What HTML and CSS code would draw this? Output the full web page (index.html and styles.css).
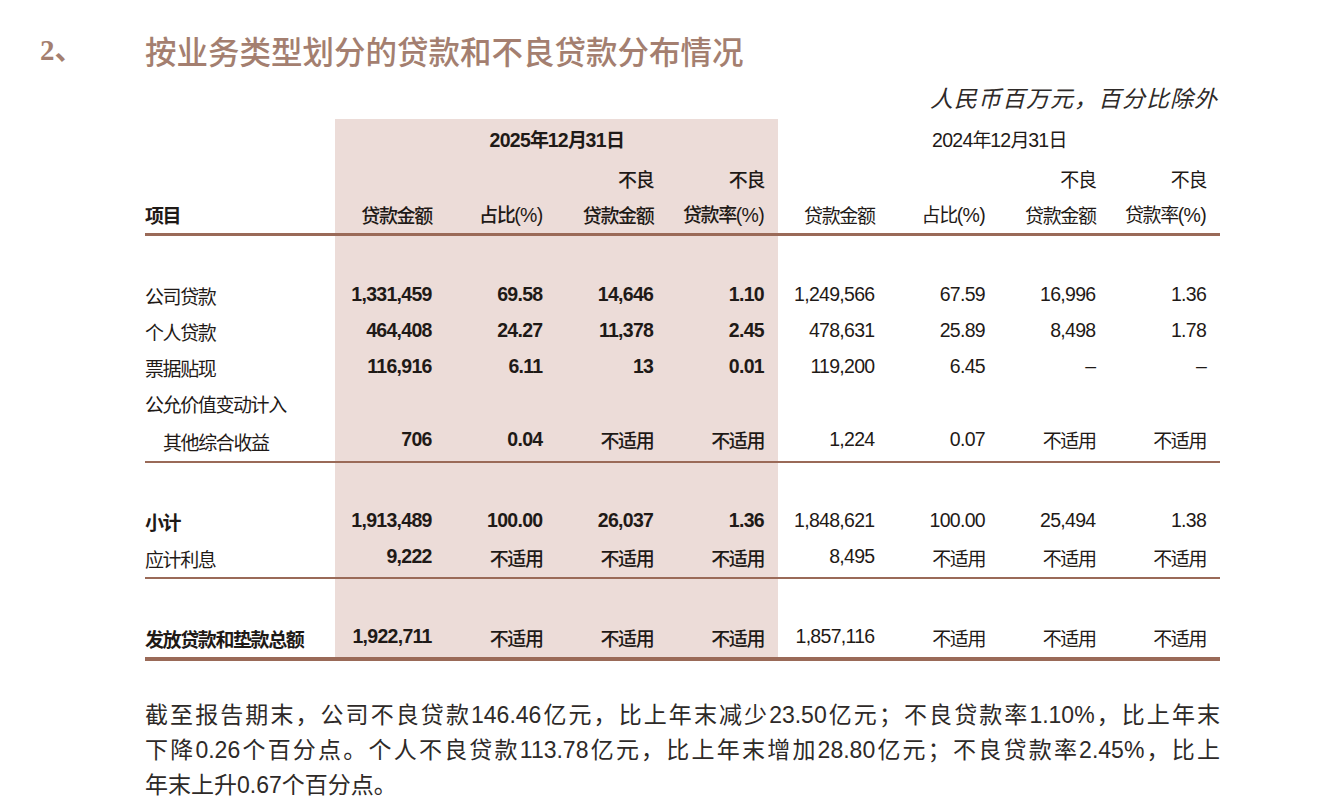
FILE: index.html
```html
<!DOCTYPE html>
<html lang="zh-CN">
<head>
<meta charset="utf-8">
<title>按业务类型划分的贷款和不良贷款分布情况</title>
<link rel="stylesheet" href="styles.css">
</head>
<body>
<div class="page">
  <h2 class="title"><span class="num">2、</span><span class="title-text">按业务类型划分的贷款和不良贷款分布情况</span></h2>
  <div class="body">
    <div class="unit">人民币百万元，百分比除外</div>
    <table class="loans">
      <colgroup>
        <col class="c-label">
        <col class="c-num"><col class="c-num"><col class="c-num"><col class="c-num">
        <col class="c-num2"><col class="c-num2"><col class="c-num2"><col class="c-num2">
      </colgroup>
      <tbody>
        <tr class="r-date">
          <td></td>
          <td class="cur date b" colspan="4">2025<span class="zh">年</span>12<span class="zh">月</span>31<span class="zh">日</span></td>
          <td class="date" colspan="4">2024<span class="zh">年</span>12<span class="zh">月</span>31<span class="zh">日</span></td>
        </tr>
        <tr class="r-std">
          <td></td>
          <td class="cur"></td><td class="cur"></td>
          <td class="cur zh m">不良</td><td class="cur zh m">不良</td>
          <td></td><td></td>
          <td class="zh">不良</td><td class="zh">不良</td>
        </tr>
        <tr class="r-head">
          <td class="lbl b">项目</td>
          <td class="cur zh m">贷款金额</td>
          <td class="cur m"><span class="zh">占比</span>(%)</td>
          <td class="cur zh m">贷款金额</td>
          <td class="cur m"><span class="zh">贷款率</span>(%)</td>
          <td class="zh">贷款金额</td>
          <td><span class="zh">占比</span>(%)</td>
          <td class="zh">贷款金额</td>
          <td><span class="zh">贷款率</span>(%)</td>
        </tr>
        <tr class="rule rule3"><td colspan="9"></td></tr>
        <tr class="r-gap41"><td></td><td class="cur"></td><td class="cur"></td><td class="cur"></td><td class="cur"></td><td colspan="4"></td></tr>
        <tr class="r-std">
          <td class="lbl">公司贷款</td>
          <td class="cur b">1,331,459</td><td class="cur b">69.58</td><td class="cur b">14,646</td><td class="cur b">1.10</td>
          <td>1,249,566</td><td>67.59</td><td>16,996</td><td>1.36</td>
        </tr>
        <tr class="r-std">
          <td class="lbl">个人贷款</td>
          <td class="cur b">464,408</td><td class="cur b">24.27</td><td class="cur b">11,378</td><td class="cur b">2.45</td>
          <td>478,631</td><td>25.89</td><td>8,498</td><td>1.78</td>
        </tr>
        <tr class="r-std">
          <td class="lbl">票据贴现</td>
          <td class="cur b">116,916</td><td class="cur b">6.11</td><td class="cur b">13</td><td class="cur b">0.01</td>
          <td>119,200</td><td>6.45</td><td>–</td><td>–</td>
        </tr>
        <tr class="r-std">
          <td class="lbl">公允价值变动计入</td>
          <td class="cur"></td><td class="cur"></td><td class="cur"></td><td class="cur"></td>
          <td></td><td></td><td></td><td></td>
        </tr>
        <tr class="r-last4">
          <td class="lbl indent">其他综合收益</td>
          <td class="cur b">706</td><td class="cur b">0.04</td><td class="cur zh m">不适用</td><td class="cur zh m">不适用</td>
          <td>1,224</td><td>0.07</td><td class="zh">不适用</td><td class="zh">不适用</td>
        </tr>
        <tr class="rule rule2"><td colspan="9"></td></tr>
        <tr class="r-gap40"><td></td><td class="cur"></td><td class="cur"></td><td class="cur"></td><td class="cur"></td><td colspan="4"></td></tr>
        <tr class="r-std">
          <td class="lbl b">小计</td>
          <td class="cur b">1,913,489</td><td class="cur b">100.00</td><td class="cur b">26,037</td><td class="cur b">1.36</td>
          <td>1,848,621</td><td>100.00</td><td>25,494</td><td>1.38</td>
        </tr>
        <tr class="r-last2">
          <td class="lbl">应计利息</td>
          <td class="cur b">9,222</td><td class="cur zh m">不适用</td><td class="cur zh m">不适用</td><td class="cur zh m">不适用</td>
          <td>8,495</td><td class="zh">不适用</td><td class="zh">不适用</td><td class="zh">不适用</td>
        </tr>
        <tr class="rule rule2"><td colspan="9"></td></tr>
        <tr class="r-gap40"><td></td><td class="cur"></td><td class="cur"></td><td class="cur"></td><td class="cur"></td><td colspan="4"></td></tr>
        <tr class="r-last2">
          <td class="lbl b">发放贷款和垫款总额</td>
          <td class="cur b">1,922,711</td><td class="cur zh m">不适用</td><td class="cur zh m">不适用</td><td class="cur zh m">不适用</td>
          <td>1,857,116</td><td class="zh">不适用</td><td class="zh">不适用</td><td class="zh">不适用</td>
        </tr>
        <tr class="rule rule4"><td colspan="9"></td></tr>
      </tbody>
    </table>
    <p class="note"><span class="jl">截至报告期末，公司不良贷款146.46亿元，比上年末减少23.50亿元；不良贷款率1.10%，比上年末</span><span class="jl">下降0.26个百分点。个人不良贷款113.78亿元，比上年末增加28.80亿元；不良贷款率2.45%，比上</span><span class="ll">年末上升0.67个百分点。</span></p>
  </div>
</div>
</body>
</html>
```

FILE: styles.css
```css
* { box-sizing: border-box; }

html, body {
  margin: 0;
  padding: 0;
  background: #ffffff;
}

.page {
  padding: 30px 0 0 40px;
  width: 1260px;
}

.title {
  display: flex;
  margin: 0;
  height: 40px;
  line-height: 40px;
  font-size: 31.5px;
  font-weight: 500;
  color: #a47f70;
  font-family: "Liberation Serif", "Noto Sans CJK SC", serif;
}

.title .num {
  width: 105px;
  font-size: 29px;
  font-weight: 700;
}

.title-text {
  font-family: "Noto Sans CJK SC", sans-serif;
  font-weight: 500;
}

.body {
  margin-left: 105px;
  width: 1075px;
}

.unit {
  margin-top: 12px;
  height: 30px;
  line-height: 30px;
  text-align: right;
  padding-right: 2px;
  font-family: "Noto Sans CJK SC", sans-serif;
  font-style: italic;
  font-size: 23px;
  letter-spacing: 1px;
  color: #2e2a28;
}

.loans {
  margin-top: 7px;
  width: 1075px;
  table-layout: fixed;
  border-collapse: separate;
  border-spacing: 0;
  color: #1f1a17;
  font-family: "Liberation Sans Narrow", "Arial Narrow", "Liberation Sans", sans-serif;
  font-size: 19.5px;
  letter-spacing: -0.7px;
}

.c-label { width: 190px; }
.c-num { width: 110.75px; }
.c-num2 { width: 110.5px; }

.loans td {
  padding: 0 14px 0 0;
  text-align: right;
  vertical-align: middle;
  line-height: 1;
  white-space: nowrap;
}

.loans td.cur { background: #ecdcd8; }

.loans .b { font-weight: 700; }

.zh {
  font-family: "Noto Sans CJK SC", sans-serif;
  font-size: 19px;
  letter-spacing: -1.4px;
}

.loans td.m, .loans td .m { font-weight: 500; }

.loans td.lbl {
  text-align: left;
  padding: 0;
  font-family: "Noto Sans CJK SC", sans-serif;
  font-size: 19px;
  letter-spacing: -1.4px;
}

.loans td.lbl.b { font-weight: 700; }

.loans td.indent { padding-left: 18px; }

.loans td.date {
  text-align: center;
  padding: 0;
  vertical-align: middle;
}

.r-date td { height: 41px; padding-top: 2px; }
.r-std td { height: 36px; }
.r-head td { height: 37px; }
.r-last4 td { height: 40px; padding-bottom: 3px; }
.r-last2 td { height: 38px; padding-bottom: 2px; }
.r-gap41 td { height: 41px; }
.r-gap40 td { height: 40px; }

.loans tr.rule td {
  padding: 0;
  font-size: 0;
  line-height: 0;
  background: #9a6a58;
}

.rule2 td { height: 2px; }
.rule3 td { height: 3px; }
.rule4 td { height: 4px; }

.note {
  margin: 37px 0 0 0;
  font-family: "Liberation Sans", "Noto Sans CJK SC", sans-serif;
  font-size: 23px;
  line-height: 35px;
  color: #2e2a28;
}

.note .jl {
  display: block;
  text-align: justify;
  text-align-last: justify;
}

.note .ll {
  display: block;
  text-align: left;
}
```
